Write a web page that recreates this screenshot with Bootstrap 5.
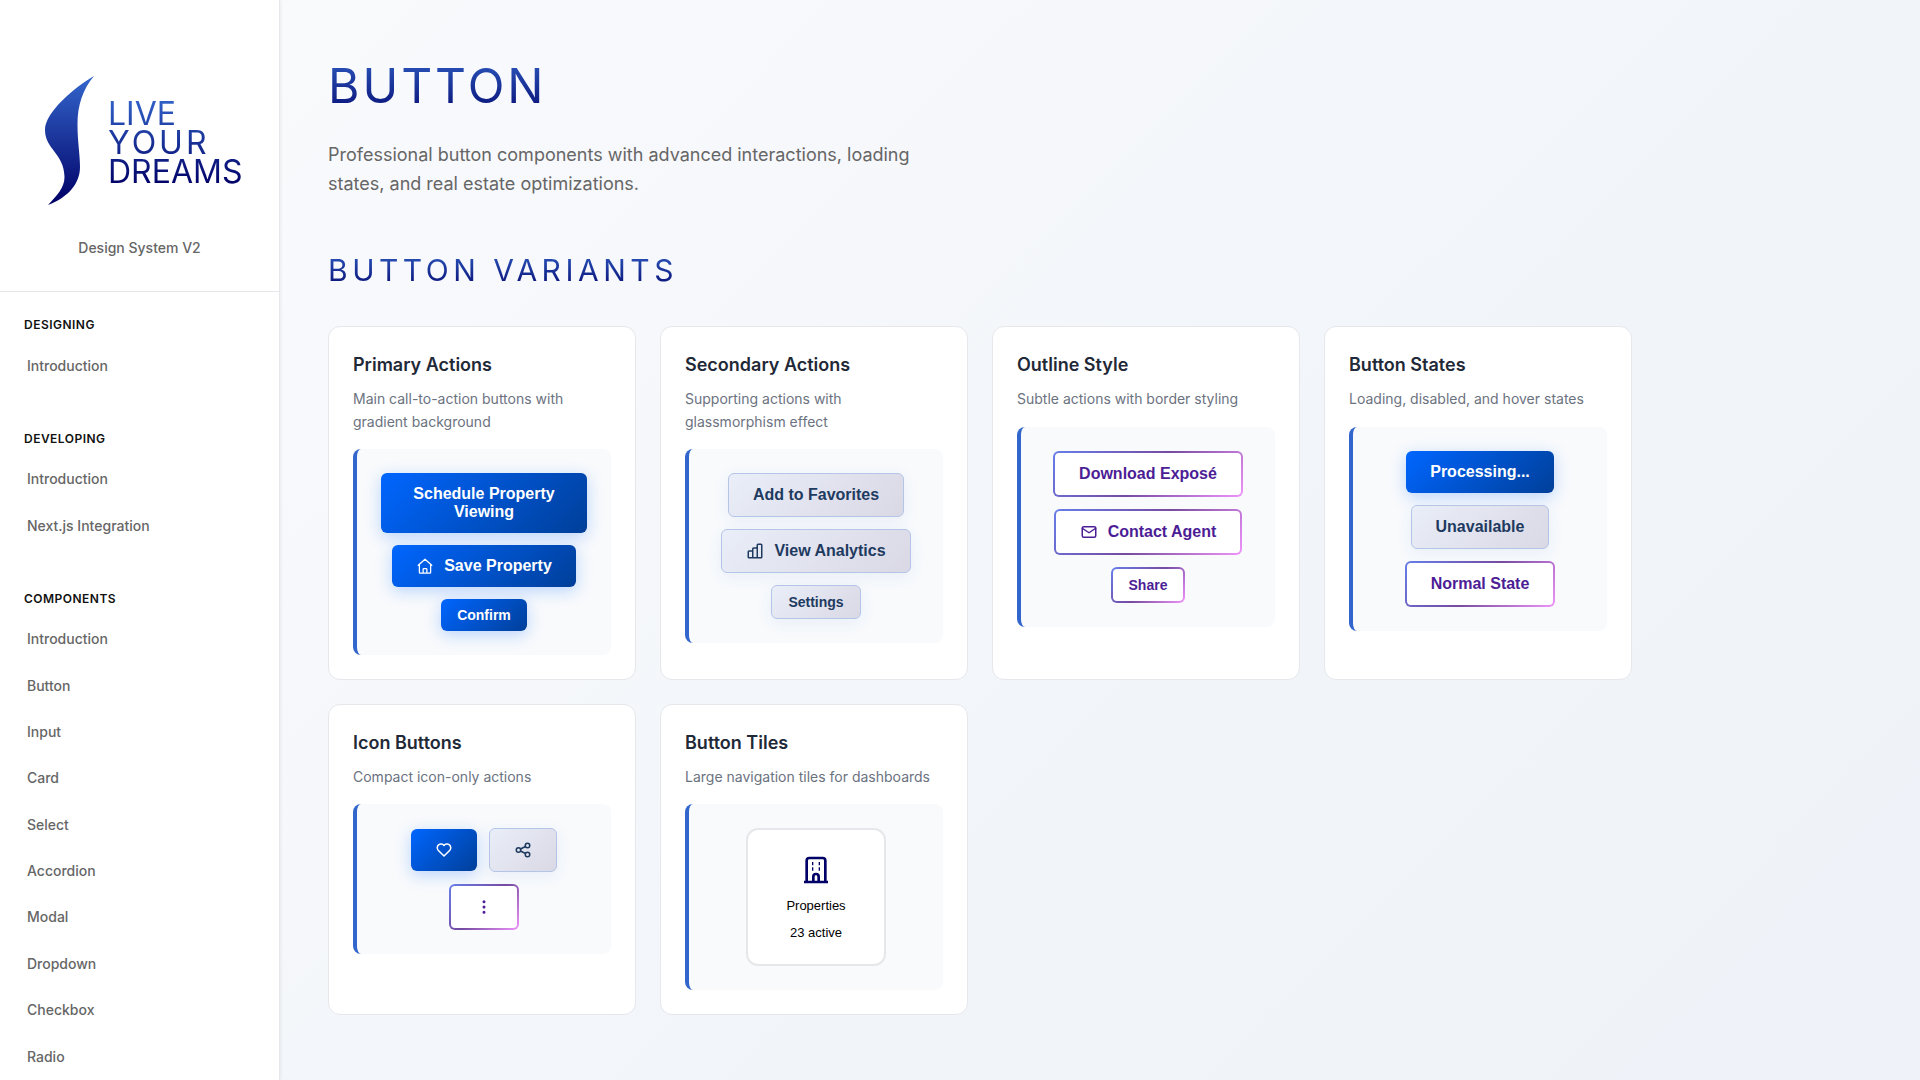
<!DOCTYPE html>
<html lang="en">
<head>
<meta charset="utf-8">
<meta name="viewport" content="width=device-width, initial-scale=1">
<title>Button – Live Your Dreams Design System</title>
<link href="https://cdn.jsdelivr.net/npm/bootstrap@5.3.0/dist/css/bootstrap.min.css" rel="stylesheet">
<style>
  :root {
    --lyd-royal: #3366cc;
    --lyd-deep: #000066;
    --lyd-line: #e5e7eb;
  }
  body {
    font-family: Inter, "Liberation Sans", sans-serif;
    font-optical-sizing: none;
    line-height: 1.6;
    color: #111;
    background: #fff;
  }

  /* Sidebar */
  .side-panel {
    width: 280px;
    height: 100vh;
    overflow: hidden;
    background: #fff;
    border-right: 1px solid var(--lyd-line);
    box-shadow: 1px 0 3px rgba(0, 0, 0, .06);
    z-index: 1;
  }
  .brand-block { padding: 76px 20px 32px; border-bottom: 1px solid var(--lyd-line); }
  .brand-row { padding-left: 24px; gap: 14px; }
  .brand-row svg { width: 50px; height: 130px; }
  .wordmark {
    font-size: 32px;
    line-height: 29px;
    padding-top: 3px;
    background: linear-gradient(180deg, var(--lyd-royal), var(--lyd-deep));
    -webkit-background-clip: text;
    background-clip: text;
    color: transparent;
  }
  .wordmark .spaced { letter-spacing: 3px; }
  .brand-note { font-size: 14px; font-weight: 500; color: #666; margin-top: 31px; }
  .side-nav { padding: 23px 24px 0; }
  .side-nav section { margin-bottom: 40px; }
  .side-title { font-size: 12px; font-weight: 600; letter-spacing: .04em; line-height: 1.6; margin: 0 0 8px; color: #111; }
  .side-nav .nav-link { font-size: 14px; font-weight: 500; color: #666; padding: 12px 3px; }
  .side-nav .nav-link:hover { color: var(--lyd-royal); }

  /* Main area */
  .main-area {
    min-width: 0;
    height: 100vh;
    overflow: hidden;
    background: linear-gradient(135deg, #f8fafc 0%, #f8f9fc 12%, #f1f5f9 60%, #eff2f8 100%);
  }
  .page-body { max-width: 1400px; padding: 48px; }
  .grad-title {
    font-weight: 400;
    line-height: 1.6;
    text-transform: uppercase;
    background: linear-gradient(180deg, var(--lyd-royal), var(--lyd-deep));
    -webkit-background-clip: text;
    background-clip: text;
    color: transparent;
  }
  h1.grad-title { font-size: 48px; letter-spacing: 3px; margin: 0 0 16px; }
  h2.grad-title { font-size: 30px; letter-spacing: .15em; margin: 0 0 32px; }
  .intro { font-size: 18px; color: #666; max-width: 600px; margin: 0 0 48px; }

  .variant-grid { display: grid; grid-template-columns: repeat(auto-fit, minmax(280px, 1fr)); gap: 24px; }
  .variant-card { background: #fff; border: 1px solid var(--lyd-line); border-radius: 12px; padding: 24px; }
  .variant-card h3 { font-size: 18px; font-weight: 600; line-height: 1.6; color: #1f2937; margin: 0 0 8px; }
  .variant-card p { font-size: 14px; color: #6b7280; margin: 0 0 16px; }
  .demo-box {
    gap: 12px;
    background: #f8fafc;
    border-left: 4px solid var(--lyd-royal);
    border-radius: 8px;
    padding: 24px;
  }

  /* Buttons */
  .lyd-btn {
    font-family: "Liberation Sans", Arial, sans-serif;
    font-size: 16px;
    font-weight: 600;
    line-height: 18px;
    padding: 12px 24px;
    border: 0;
    border-radius: 6px;
    display: inline-flex;
    align-items: center;
    justify-content: center;
    gap: 10px;
  }
  .lyd-btn svg { width: 18px; height: 18px; flex: none; }
  .lyd-btn.compact { font-size: 14px; line-height: 16px; padding: 8px 16px; }
  .lyd-primary, .lyd-primary:hover {
    color: #fff;
    background: linear-gradient(135deg, #0066ff 0%, #003f99 100%);
    box-shadow: 0 4px 16px rgba(0, 102, 255, .25);
  }
  .lyd-secondary, .lyd-secondary:hover, .lyd-secondary:disabled {
    color: #1e3a5f;
    opacity: 1;
    border: 1px solid #b5c5e8;
    background: linear-gradient(135deg, #e9eef8 0%, #dad8e5 100%);
    box-shadow: 0 4px 16px rgba(51, 102, 204, .08);
  }
  .lyd-outline, .lyd-outline:hover {
    color: #4c1d95;
    border: 2px solid transparent;
    background: linear-gradient(#fff, #fff) padding-box,
      linear-gradient(135deg, #667eea 0%, #764ba2 50%, #f093fb 100%) border-box;
  }
  .lyd-tile {
    font-family: "Liberation Sans", Arial, sans-serif;
    font-size: 13px;
    line-height: 15px;
    color: #000;
    min-width: 140px;
    padding: 24px;
    gap: 12px;
    background: #fff;
    border: 2px solid var(--lyd-line);
    border-radius: 12px;
  }
  .lyd-tile svg { width: 32px; height: 32px; color: var(--lyd-deep); }
  .line-icon { fill: none; stroke: currentColor; stroke-width: 2; stroke-linecap: round; stroke-linejoin: round; }
</style>
</head>
<body>
<div class="d-flex">
  <aside class="side-panel flex-shrink-0 position-relative">
    <div class="brand-block">
      <div class="brand-row d-flex align-items-center">
        <svg viewBox="0 0 50 130" aria-hidden="true">
          <defs><linearGradient id="swoosh" x1="0" y1="0" x2="0" y2="1"><stop offset="0" stop-color="#3366cc"/><stop offset="1" stop-color="#000066"/></linearGradient></defs>
          <path fill="url(#swoosh)" d="M50 0C31 11 1 36 1 54C1 73 20.500 78 20.500 101C20.500 112 13 119 4 129C25 121 36 107 36 91C36 78 33.500 66 33.500 48C33.500 29 39 13 50 0Z"/>
        </svg>
        <div class="wordmark">
          <div>LIVE</div>
          <div class="spaced">YOUR</div>
          <div>DREAMS</div>
        </div>
      </div>
      <div class="brand-note text-center">Design System V2</div>
    </div>
    <nav class="side-nav" aria-label="Design system">
      <section>
        <h2 class="side-title">DESIGNING</h2>
        <div class="nav flex-column"><a class="nav-link" href="#">Introduction</a></div>
      </section>
      <section>
        <h2 class="side-title">DEVELOPING</h2>
        <div class="nav flex-column">
          <a class="nav-link" href="#">Introduction</a>
          <a class="nav-link" href="#">Next.js Integration</a>
        </div>
      </section>
      <section>
        <h2 class="side-title">COMPONENTS</h2>
        <div class="nav flex-column">
          <a class="nav-link" href="#">Introduction</a>
          <a class="nav-link" href="#">Button</a>
          <a class="nav-link" href="#">Input</a>
          <a class="nav-link" href="#">Card</a>
          <a class="nav-link" href="#">Select</a>
          <a class="nav-link" href="#">Accordion</a>
          <a class="nav-link" href="#">Modal</a>
          <a class="nav-link" href="#">Dropdown</a>
          <a class="nav-link" href="#">Checkbox</a>
          <a class="nav-link" href="#">Radio</a>
        </div>
      </section>
    </nav>
  </aside>

  <main class="main-area flex-grow-1">
    <div class="page-body">
      <h1 class="grad-title">Button</h1>
      <p class="intro">Professional button components with advanced interactions, loading states, and real estate optimizations.</p>
      <h2 class="grad-title">Button Variants</h2>

      <div class="variant-grid">
        <article class="variant-card">
          <h3>Primary Actions</h3>
          <p>Main call-to-action buttons with gradient background</p>
          <div class="demo-box d-flex flex-wrap justify-content-center align-items-center">
            <button type="button" class="btn lyd-btn lyd-primary">Schedule Property Viewing</button>
            <button type="button" class="btn lyd-btn lyd-primary">
              <svg class="line-icon" viewBox="0 0 24 24" aria-hidden="true"><path stroke-width="1.700" d="M3 11l9-8 9 8M4.500 10v10.500a1 1 0 0 0 1 1h13a1 1 0 0 0 1-1V10M9.500 21v-4.500a1 1 0 0 1 1-1h3a1 1 0 0 1 1 1V21"/></svg>
              Save Property</button>
            <button type="button" class="btn lyd-btn lyd-primary compact">Confirm</button>
          </div>
        </article>

        <article class="variant-card">
          <h3>Secondary Actions</h3>
          <p>Supporting actions with glassmorphism effect</p>
          <div class="demo-box d-flex flex-wrap justify-content-center align-items-center">
            <button type="button" class="btn lyd-btn lyd-secondary">Add to Favorites</button>
            <button type="button" class="btn lyd-btn lyd-secondary">
              <svg class="line-icon" viewBox="0 0 24 24" aria-hidden="true"><path d="M3 13a1 1 0 0 1 1-1h4a1 1 0 0 1 1 1v8H4a1 1 0 0 1-1-1zM9 9a1 1 0 0 1 1-1h4a1 1 0 0 1 1 1v12H9zM15 4a1 1 0 0 1 1-1h4a1 1 0 0 1 1 1v16a1 1 0 0 1-1 1h-5z"/></svg>
              View Analytics</button>
            <button type="button" class="btn lyd-btn lyd-secondary compact">Settings</button>
          </div>
        </article>

        <article class="variant-card">
          <h3>Outline Style</h3>
          <p>Subtle actions with border styling</p>
          <div class="demo-box d-flex flex-wrap justify-content-center align-items-center">
            <button type="button" class="btn lyd-btn lyd-outline">Download Exposé</button>
            <button type="button" class="btn lyd-btn lyd-outline">
              <svg class="line-icon" viewBox="0 0 24 24" aria-hidden="true"><rect x="3" y="5" width="18" height="14" rx="2"/><path d="m3 7 9 6 9-6"/></svg>
              Contact Agent</button>
            <button type="button" class="btn lyd-btn lyd-outline compact">Share</button>
          </div>
        </article>

        <article class="variant-card">
          <h3>Button States</h3>
          <p>Loading, disabled, and hover states</p>
          <div class="demo-box d-flex flex-wrap justify-content-center align-items-center">
            <button type="button" class="btn lyd-btn lyd-primary">Processing...</button>
            <button type="button" class="btn lyd-btn lyd-secondary" disabled>Unavailable</button>
            <button type="button" class="btn lyd-btn lyd-outline">Normal State</button>
          </div>
        </article>

        <article class="variant-card">
          <h3>Icon Buttons</h3>
          <p>Compact icon-only actions</p>
          <div class="demo-box d-flex flex-wrap justify-content-center align-items-center">
            <button type="button" class="btn lyd-btn lyd-primary" aria-label="Favorite">
              <svg class="line-icon" viewBox="0 0 24 24" aria-hidden="true"><path d="M19.500 12.572 12 20l-7.500-7.428A5 5 0 1 1 12 6.006a5 5 0 1 1 7.500 6.572"/></svg>
            </button>
            <button type="button" class="btn lyd-btn lyd-secondary" aria-label="Share">
              <svg class="line-icon" viewBox="0 0 24 24" aria-hidden="true"><circle cx="6" cy="12" r="3"/><circle cx="18" cy="6" r="3"/><circle cx="18" cy="18" r="3"/><path d="m8.700 10.700 6.600-3.400M8.700 13.300l6.600 3.400"/></svg>
            </button>
            <button type="button" class="btn lyd-btn lyd-outline" aria-label="More">
              <svg class="line-icon" viewBox="0 0 24 24" aria-hidden="true"><circle cx="12" cy="5" r="1"/><circle cx="12" cy="12" r="1"/><circle cx="12" cy="19" r="1"/></svg>
            </button>
          </div>
        </article>

        <article class="variant-card">
          <h3>Button Tiles</h3>
          <p>Large navigation tiles for dashboards</p>
          <div class="demo-box d-flex flex-wrap justify-content-center align-items-center">
            <button type="button" class="lyd-tile d-flex flex-column align-items-center">
              <svg class="line-icon" viewBox="0 0 24 24" aria-hidden="true"><path stroke-linecap="butt" d="M3 21h18M5 21V5a2 2 0 0 1 2-2h10a2 2 0 0 1 2 2v16M10 21v-4a2 2 0 0 1 4 0v4"/><path stroke-width="1" stroke-linecap="butt" d="M9.500 6v2.500M9.500 10v2.500M14.500 6v2.500M14.500 10v2.500"/></svg>
              <span>Properties</span>
              <span>23 active</span>
            </button>
          </div>
        </article>
      </div>
    </div>
  </main>
</div>
<script src="https://cdn.jsdelivr.net/npm/bootstrap@5.3.0/dist/js/bootstrap.bundle.min.js"></script>
</body>
</html>
